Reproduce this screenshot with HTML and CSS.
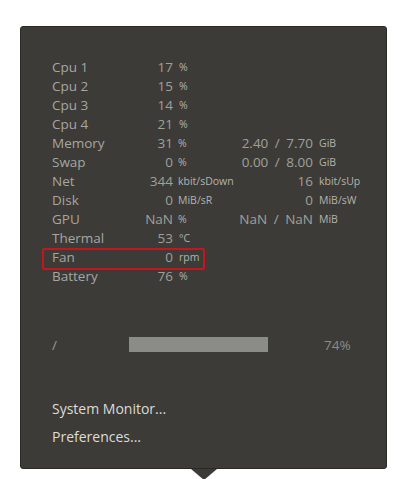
FILE: index.html
```html
<!DOCTYPE html>
<html lang="en">
<head>
    <meta charset="UTF-8">
    <meta name="viewport" content="width=device-width, initial-scale=1.0">
    <title>System Monitor Indicator</title>
    <link rel="stylesheet" href="styles.css">
</head>
<body>
    <div class="popup">
        <div class="stats">
            <div class="row"><span class="label">Cpu 1</span><span class="num">17</span><span class="unit">%</span></div>
            <div class="row"><span class="label">Cpu 2</span><span class="num">15</span><span class="unit">%</span></div>
            <div class="row"><span class="label">Cpu 3</span><span class="num">14</span><span class="unit">%</span></div>
            <div class="row"><span class="label">Cpu 4</span><span class="num">21</span><span class="unit">%</span></div>
            <div class="row"><span class="label">Memory</span><span class="num">31</span><span class="unit">%</span><span class="num">2.40 / 7.70</span><span class="unit">GiB</span></div>
            <div class="row"><span class="label">Swap</span><span class="num">0</span><span class="unit">%</span><span class="num">0.00 / 8.00</span><span class="unit">GiB</span></div>
            <div class="row"><span class="label">Net</span><span class="num">344</span><span class="unit">kbit/sDown</span><span class="num">16</span><span class="unit">kbit/sUp</span></div>
            <div class="row"><span class="label">Disk</span><span class="num">0</span><span class="unit">MiB/sR</span><span class="num">0</span><span class="unit">MiB/sW</span></div>
            <div class="row"><span class="label">GPU</span><span class="num">NaN</span><span class="unit">%</span><span class="num">NaN / NaN</span><span class="unit">MiB</span></div>
            <div class="row"><span class="label">Thermal</span><span class="num">53</span><span class="unit">°C</span></div>
            <div class="row highlight"><span class="label">Fan</span><span class="num">0</span><span class="unit">rpm</span></div>
            <div class="row"><span class="label">Battery</span><span class="num">76</span><span class="unit">%</span></div>
        </div>

        <!-- disk usage -->
        <div class="disk">
            <span class="mount">/</span>
            <div class="bar"><div class="fill" style="width: 100%"></div></div>
            <span class="percent">74%</span>
        </div>

        <div class="menu">
            <div class="menu-item">System Monitor...</div>
            <div class="menu-item">Preferences...</div>
        </div>
    </div>
    <div class="arrow"></div>
</body>
</html>
```

FILE: styles.css
```css
body {
    margin: 0;
    background-color: #ffffff;
    font-family: 'Open Sans', sans-serif;
}

.popup {
    box-sizing: border-box;
    width: 367px;
    margin: 26px 0 0 20px;
    padding: 30px 0 17px 31px;
    background-color: #3c3b37;
    border: 1px solid #2a2926;
    border-radius: 3px;
}

/* arrow pointing to the panel */
.arrow {
    width: 26px;
    height: 11px;
    margin-left: 191px;
    background-color: #3c3b37;
    clip-path: polygon(0 0, 100% 0, 50% 100%);
}

.row {
    position: relative;
    display: grid;
    grid-template-columns: 70px 51px 64px 76px auto;
    height: 19px;
    align-items: center;
    color: #a0a09b;
}

.label {
    font-size: 13.5px;
    color: #a6a6a1;
}

.num {
    text-align: right;
    font-size: 13.5px;
    white-space: nowrap;
    word-spacing: 3px;
}

.unit {
    padding-left: 5px;
    font-size: 10.5px;
    color: #b3b3ae;
    white-space: nowrap;
}

.row .unit:last-child {
    padding-left: 6px;
}

.highlight::after {
    content: '';
    position: absolute;
    left: -10px;
    top: 1px;
    width: 163px;
    height: 22px;
    box-sizing: border-box;
    border: 2px solid #c4161c;
    border-radius: 2px;
}

.disk {
    display: flex;
    align-items: center;
    height: 15px;
    margin-top: 52px;
    color: #9a9a95;
    font-size: 13.5px;
}

.mount {
    width: 77px;
}

.bar {
    width: 139px;
    height: 15px;
    background-color: #4a4945;
}

.fill {
    height: 100%;
    background-color: #8b8b87;
}

.percent {
    margin-left: 56px;
    color: #8c8c87;
}

.menu {
    margin-top: 43px;
}

.menu-item {
    height: 28px;
    line-height: 28px;
    font-size: 14px;
    color: #dddcd7;
}
```
